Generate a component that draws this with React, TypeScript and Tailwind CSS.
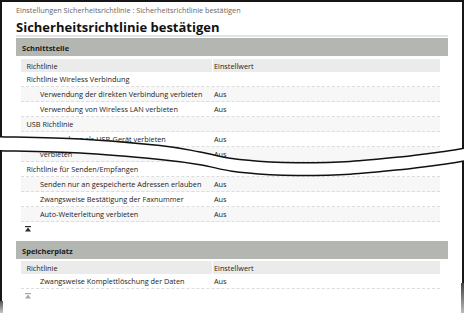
import React from "react";

type Pt = [number, number];

function smooth(pts: Pt[], move = true): string {
  let d = move ? `M${pts[0][0]},${pts[0][1]}` : `L${pts[0][0]},${pts[0][1]}`;
  for (let i = 0; i < pts.length - 1; i++) {
    const p0 = pts[i - 1] || pts[i];
    const p1 = pts[i];
    const p2 = pts[i + 1];
    const p3 = pts[i + 2] || p2;
    const c1: Pt = [p1[0] + (p2[0] - p0[0]) / 6, p1[1] + (p2[1] - p0[1]) / 6];
    const c2: Pt = [p2[0] - (p3[0] - p1[0]) / 6, p2[1] - (p3[1] - p1[1]) / 6];
    d += ` C${c1[0].toFixed(2)},${c1[1].toFixed(2)} ${c2[0].toFixed(2)},${c2[1].toFixed(2)} ${p2[0]},${p2[1]}`;
  }
  return d;
}

const upper: Pt[] = [
  [0, 136.7],
  [80, 139],
  [160, 145.5],
  [200, 152],
  [232, 158.5],
  [270, 162],
  [300, 162.8],
  [350, 161.5],
  [400, 157],
  [440, 152],
  [464, 148.3],
];
const lower: Pt[] = upper.map(([x, y], i) => [x, y + (i < 3 ? 14 : 12.7)] as Pt);

function Tear() {
  const up = smooth(upper);
  const lowRev = smooth([...lower].reverse(), false);
  const fill = `${up} L466,${upper[upper.length - 1][1]} L466,${lower[lower.length - 1][1]} ${lowRev} L-2,${lower[0][1]} L-2,${upper[0][1]} Z`;
  return (
    <svg
      className="absolute left-0 top-0 pointer-events-none"
      width={464}
      height={313}
      viewBox="0 0 464 313"
    >
      <path d={fill} fill="#ffffff" />
      <path d={up} fill="none" stroke="#111" strokeWidth={1.5} />
      <path d={smooth(lower)} fill="none" stroke="#111" strokeWidth={1.5} />
    </svg>
  );
}

function TopIcon({ light = false }: { light?: boolean }) {
  const c = light ? "#a9a9a9" : "#2a2a2a";
  return (
    <svg width={6} height={6} viewBox="0 0 6 6" className="block">
      <rect x={0} y={0} width={6} height={1.2} fill={c} />
      <path d="M3,1.6 L6,5.6 L0,5.6 Z" fill={c} />
    </svg>
  );
}

type Row = { label: string; value?: string; indent?: boolean };

function Rows({ rows }: { rows: Row[] }) {
  return (
    <div className="ml-[5px] mr-[8px] flex flex-col">
      {rows.map((r, i) => (
        <div
          key={i}
          className={`flex h-[15px] items-center border-b border-dashed border-[#dcdcdc] ${
            i % 2 === 1 ? "bg-[#f7f7f7]" : "bg-white"
          }`}
        >
          <div
            className={`w-[192px] shrink-0 whitespace-nowrap ${
              r.indent ? "pl-[19px]" : "pl-[5.5px]"
            }`}
          >
            {r.label}
          </div>
          <div className="pl-[1px] whitespace-nowrap">{r.value ?? ""}</div>
        </div>
      ))}
    </div>
  );
}

function SectionHead({ title }: { title: string }) {
  return (
    <div className="flex h-[18px] items-center bg-[#b4b7b1] pl-[6px] pt-[2px] text-[7.5px] font-bold text-[#1a1a1a]">
      {title}
    </div>
  );
}

function ColHead({ mt }: { mt: string }) {
  return (
    <div className={`${mt} ml-[5px] mr-[8px] flex h-[13px] items-center bg-[#ebebeb]`}>
      <div className="flex h-full w-[192px] shrink-0 items-center border-r border-white pl-[5.5px]">
        Richtlinie
      </div>
      <div className="pl-[1px]">Einstellwert</div>
    </div>
  );
}

export default function App() {
  const rows1: Row[] = [
    { label: "Richtlinie Wireless Verbindung" },
    { label: "Verwendung der direkten Verbindung verbieten", value: "Aus", indent: true },
    { label: "Verwendung von Wireless LAN verbieten", value: "Aus", indent: true },
    { label: "USB Richtlinie" },
    { label: "Verwendung als USB-Gerät verbieten", value: "Aus", indent: true },
    { label: "verbieten", value: "Aus", indent: true },
    { label: "Richtlinie für Senden/Empfangen" },
    { label: "Senden nur an gespeicherte Adressen erlauben", value: "Aus", indent: true },
    { label: "Zwangsweise Bestätigung der Faxnummer", value: "Aus", indent: true },
    { label: "Auto-Weiterleitung verbieten", value: "Aus", indent: true },
  ];
  const rows2: Row[] = [
    { label: "Zwangsweise Komplettlöschung der Daten", value: "Aus", indent: true },
  ];

  return (
    <div className="relative h-[313px] w-[464px] overflow-hidden bg-white font-['Open_Sans',sans-serif] text-[7.3px] leading-[10px] text-[#1c1c1c]">
      <div className="h-full border-x-2 border-t-2 border-[#161616] px-[14px] pt-[3px]">
        <div className="whitespace-nowrap text-[#666]">
          Einstellungen Sicherheitsrichtlinie : Sicherheitsrichtlinie bestätigen
        </div>
        <div className="mt-[4px] whitespace-nowrap text-[13px] font-bold leading-[16px] text-[#111]">
          Sicherheitsrichtlinie bestätigen
        </div>
        <div className="h-[2px] bg-[#e4e4e4]" />
        <div className="mt-[1px]">
          <SectionHead title="Schnittstelle" />
          <ColHead mt="mt-[3px]" />
          <Rows rows={rows1} />
          <div className="ml-[9px] mt-[4px]">
            <TopIcon />
          </div>
        </div>
        <div className="mt-[9px]">
          <SectionHead title="Speicherplatz" />
          <ColHead mt="mt-[2px]" />
          <Rows rows={rows2} />
          <div className="ml-[9px] mt-[4px]">
            <TopIcon light />
          </div>
        </div>
      </div>
      <Tear />
      <div className="pointer-events-none absolute bottom-0 left-0 h-[12px] w-[3px] bg-gradient-to-b from-[#555] to-[#c8c8c8]" />
      <div className="pointer-events-none absolute bottom-0 right-0 h-[30px] w-[3px] bg-gradient-to-b from-[#444] to-[#bdbdbd]" />
    </div>
  );
}
